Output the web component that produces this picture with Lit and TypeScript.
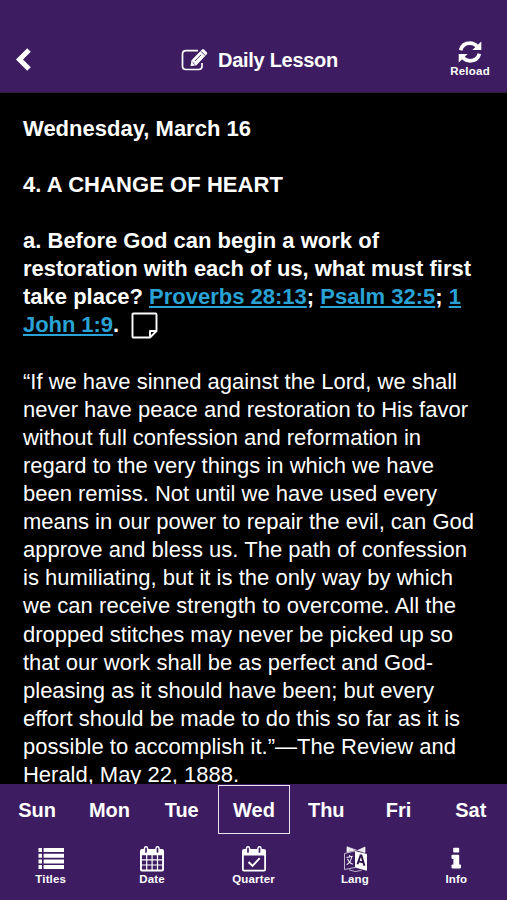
import { LitElement, html, css, svg } from "lit";
import { customElement } from "lit/decorators.js";
import { classMap } from "lit/directives/class-map.js";

const DAYS = ["Sun", "Mon", "Tue", "Wed", "Thu", "Fri", "Sat"];

const calendarTop = svg`
  <rect x="4.800" y="0" width="4.400" height="8.200" rx="2.200" fill="#fff"/>
  <rect x="16.300" y="0" width="4.400" height="8.200" rx="2.200" fill="#fff"/>
  <path d="M7 2.300V6M18.500 2.300V6" stroke="#3d1c61" stroke-width="1.700" stroke-linecap="round"/>`;

const icons = {
  Titles: svg`
    <path fill="#fff" d="M.5 2h3.500v4H.5zM.5 7.700h3.500v4H.5zM.5 13.400h3.500v4H.5zM.5 19h3.500v4H.5zM5.600 2h20.400v4H5.600zM5.600 7.700h20.400v4H5.600zM5.600 13.400h20.400v4H5.600zM5.600 19h20.400v4H5.600z"/>`,
  Date: svg`
    <path fill="#fff" fill-rule="evenodd" d="M3 3h20q2 0 2 2v18.500q0 2-2 2H3q-2 0-2-2V5q0-2 2-2zM2.900 9.300v3.900h4.200V9.300zM8.300 9.300v3.900h4.200V9.300zM13.700 9.300v3.900h4.200V9.300zM19.100 9.300v3.900h4V9.300zM2.900 14.400v4h4.200v-4zM8.300 14.400v4h4.200v-4zM13.700 14.400v4h4.200v-4zM19.100 14.400v4h4v-4zM2.900 19.600v4h4.200v-4zM8.300 19.600v4h4.200v-4zM13.700 19.600v4h4.200v-4zM19.100 19.600v4h4v-4z"/>
    ${calendarTop}`,
  Quarter: svg`
    <path fill="#fff" fill-rule="evenodd" d="M3 3h20q2 0 2 2v18.500q0 2-2 2H3q-2 0-2-2V5q0-2 2-2zM2.800 9.500v14.200h20.400V9.500z"/>
    ${calendarTop}
    <path d="M7.500 16l4 4 7.200-7.800" fill="none" stroke="#fff" stroke-width="1.900"/>`,
  Lang: svg`
    <path fill="#fff" d="M13 5L25 8v16.800L13 21.500z"/>
    <path fill="none" stroke="#fff" stroke-width=".9" opacity=".75" d="M13 5L2.500 7.500v16L13 21.500M5 6.500V.8L15.500 4.500 23 1V6.500M7 23.800q6 3.200 12.500.6"/>
    <path fill="#fff" opacity=".9" d="M5 .8l9 3.500-9 2zM23 1V7L15.500 4.500z"/>
    <path fill="none" stroke="#fff" stroke-width="1.100" opacity=".9" d="M4.500 11.500l6.300-1.300M7.500 9l.4 1.900M9.800 10.500q-1 6-5.200 8.300M5.500 12.800q2 4.600 5.300 5.500"/>
    <path fill="none" stroke="#2a1048" stroke-width="1.900" d="M15.500 18.200L18.500 9.500h.9l3 10.300M16.600 15.400l4.400 1"/>`,
  Info: svg`
    <path fill="#fff" d="M10.200 2.600q0-.8.8-.8h4.400q.8 0 .8.8v3.200q0 .8-.8.800h-4.400q-.8 0-.8-.8zM8.500 9.600q0-.8.8-.8h6.100q.8 0 .8.800v8.900h1q.8 0 .8.800v2.300q0 .8-.8.800H9.300q-.8 0-.8-.8v-2.300q0-.8.800-.8h1.100v-5.600H9.300q-.8 0-.8-.8z"/>`,
};

@customElement("app-root")
export class AppRoot extends LitElement {
  static styles = css`
    :host {
      display: flex;
      flex-direction: column;
      width: 100%;
      height: 100vh;
      overflow: hidden;
      background: #000;
      color: #fff;
      font-family: "Liberation Sans", Arial, sans-serif;
    }
    svg { display: block; flex: none; }
    header {
      box-sizing: border-box;
      flex: none;
      height: 93px;
      padding: 27px 17px 0 14px;
      display: grid;
      grid-template-columns: 60px 1fr 60px;
      align-items: center;
      background: #3d1c61;
      border-bottom: 1px solid #2c2036;
    }
    .title {
      display: flex;
      align-items: center;
      justify-content: center;
      gap: 10px;
      padding-left: 15px;
      font-size: 20px;
      font-weight: bold;
      white-space: nowrap;
    }
    .title span { padding-top: 2px; }
    .reload {
      justify-self: end;
      display: flex;
      flex-direction: column;
      align-items: center;
      padding-bottom: 2px;
      font-size: 11.5px;
      font-weight: bold;
      line-height: 14px;
      letter-spacing: 0.25px;
    }
    main {
      flex: 1;
      min-height: 0;
      overflow: hidden;
      padding: 21.6px 0 0 23px;
      font-size: 22px;
      line-height: 28.12px;
      white-space: nowrap;
    }
    h1, h2, h3, p { margin: 0; font-size: inherit; }
    h1, h2, h3 { margin-bottom: 28.12px; }
    a {
      color: #29a3d6;
      text-decoration: underline;
      text-decoration-thickness: 2px;
      text-underline-offset: 2px;
      text-decoration-skip-ink: none;
    }
    .note { display: inline-block; vertical-align: middle; margin: -6px 0 -3px 6px; }
    .line { display: block; height: 28.12px; }
    footer { flex: none; height: 116px; background: #3d1c61; }
    .days { display: flex; height: 50px; padding-left: 1px; }
    .day {
      box-sizing: border-box;
      flex: 1;
      margin-top: 1px;
      display: flex;
      align-items: center;
      justify-content: center;
      border: 1.5px solid transparent;
      font-size: 20px;
      font-weight: bold;
      padding-top: 2px;
    }
    .current { border-color: #e9e2f0; }
    .tabs { display: flex; padding-top: 12px; }
    .tab {
      flex: 1;
      display: flex;
      flex-direction: column;
      align-items: center;
      font-size: 11.5px;
      font-weight: bold;
      line-height: 13px;
      letter-spacing: 0.15px;
    }
  `;

  render() {
    return html`
      <header>
        <svg width="20" height="26" viewBox="0 0 20 26"><path d="M15 3L5.500 12.500l9.500 9.500" fill="none" stroke="#fff" stroke-width="5"/></svg>
        <div class="title">
          <svg width="27" height="24" viewBox="0 0 27 24">
            <path d="M17 2.600H5Q1.500 2.600 1.500 6v12q0 3.500 3.500 3.500h12.500q3.500 0 3.500-3.500v-3" fill="none" stroke="#fff" stroke-width="1.700"/>
            <path d="M9.500 18.300l1-6L21 1.500q1-1 2 0l2.800 2.800q1 1 0 2L15.500 17.300z" fill="#fff"/>
            <path d="M14 12.900l6-6M20 3.300l4.300 4.300M11.500 14.200l2.300 2.200" fill="none" stroke="#3d1c61" stroke-width=".9"/>
          </svg>
          <span data-width="120">Daily Lesson</span>
        </div>
        <div class="reload">
          <svg width="24" height="24" viewBox="0 0 24 24">
            <path d="M2.600 10.200Q4.500 3.200 12 3.200q4 0 7 3M21.400 13.800Q19.500 20.800 12 20.800q-4 0-7-3" fill="none" stroke="#fff" stroke-width="3.700"/>
            <path d="M23.300 1.500v8.500h-9zM.7 22.500V14h9z" fill="#fff"/>
          </svg>
          <span>Reload</span>
        </div>
      </header>
      <main>
        <h1>${this.line("Wednesday, March 16", 228)}</h1>
        <h2>${this.line("4. A CHANGE OF HEART", 260)}</h2>
        <h3>
          ${this.line("a. Before God can begin a work of", 356)}
          ${this.line("restoration with each of us, what must first", 448)}
          ${this.line(html`take place? <a>Proverbs 28:13</a>; <a>Psalm 32:5</a>; <a>1</a>`, 438)}
          <span class="line"><span data-width="96"><a>John 1:9</a>.</span> <svg class="note" width="27" height="27" viewBox="0 0 27 27"><path d="M1.500 2.500q0-1 1-1h22q1 0 1 1V19l-6.500 6.500H2.500q-1 0-1-1zM19 25v-6h6" fill="none" stroke="#fff" stroke-width="1.900" stroke-linejoin="round"/></svg></span>
        </h3>
        <p>
          ${this.line("“If we have sinned against the Lord, we shall", 434)}
          ${this.line("never have peace and restoration to His favor", 445)}
          ${this.line("without full confession and reformation in", 398)}
          ${this.line("regard to the very things in which we have", 411)}
          ${this.line("been remiss. Not until we have used every", 414)}
          ${this.line("means in our power to repair the evil, can God", 451)}
          ${this.line("approve and bless us. The path of confession", 444)}
          ${this.line("is humiliating, but it is the only way by which", 430)}
          ${this.line("we can receive strength to overcome. All the", 433)}
          ${this.line("dropped stitches may never be picked up so", 430)}
          ${this.line("that our work shall be as perfect and God-", 410)}
          ${this.line("pleasing as it should have been; but every", 411)}
          ${this.line("effort should be made to do this so far as it is", 437)}
          ${this.line("possible to accomplish it.”—The Review and", 433)}
          ${this.line("Herald, May 22, 1888.", 216)}
        </p>
      </main>
      <footer>
        <div class="days">
          ${DAYS.map((d) => html`<div class=${classMap({ day: true, current: d === "Wed" })}>${d}</div>`)}
        </div>
        <div class="tabs">
          ${Object.entries(icons).map(([name, icon]) => html`
            <div class="tab"><svg width="26" height="27" viewBox="0 0 26 27">${icon}</svg><span>${name}</span></div>`)}
        </div>
      </footer>
    `;
  }

  private line(content: unknown, width: number) {
    return html`<span class="line"><span data-width=${width}>${content}</span></span>`;
  }

  firstUpdated() {
    this.renderRoot.querySelectorAll<HTMLElement>("[data-width]").forEach((el) => {
      const slack = Number(el.dataset.width) - el.getBoundingClientRect().width;
      el.style.letterSpacing = `${slack / (el.textContent ?? " ").length}px`;
    });
  }
}
